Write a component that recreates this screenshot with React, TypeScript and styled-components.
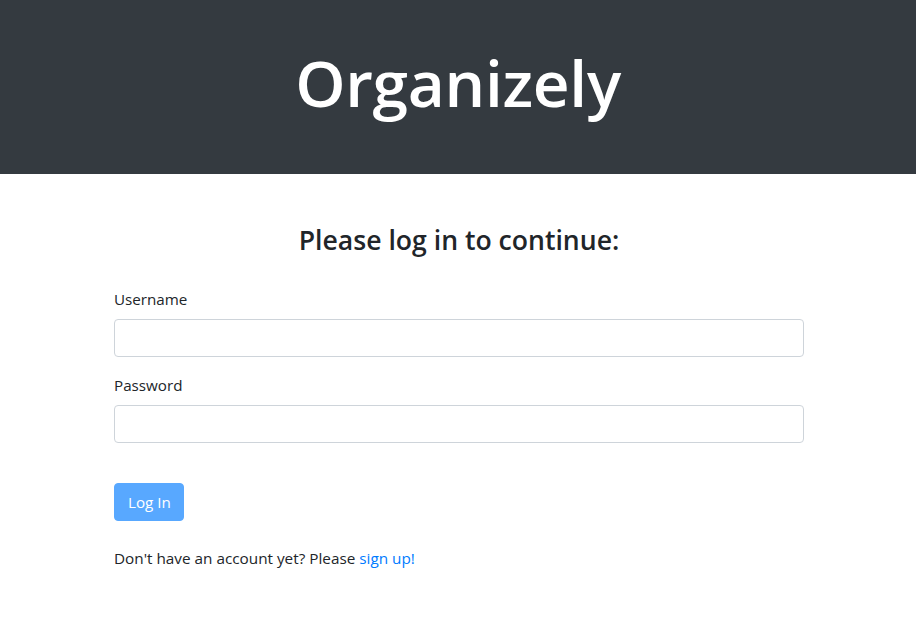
import React from "react";
import styled, { createGlobalStyle } from "styled-components";

const GlobalStyle = createGlobalStyle`
  html, body { margin: 0; padding: 0; background: #fff; }
  body {
    font-family: "Open Sans", "Noto Sans", "Liberation Sans", sans-serif;
    font-size: 16px;
    line-height: 1.5;
    color: #212529;
  }
  * { box-sizing: border-box; }
`;

const Header = styled.header`
  background: #343a40;
  height: 174px;
  display: flex;
  align-items: center;
  justify-content: center;
`;

const Title = styled.h1`
  margin: 0;
  color: #fff;
  font-size: 64px;
  font-weight: 600;
  line-height: 1;
  padding-bottom: 8px;
  letter-spacing: -0.3px;
`;

const Container = styled.main`
  max-width: 720px;
  margin: 0 auto;
  padding: 50px 14px 0 16px;
`;

const Heading = styled.h3`
  margin: 0 0 30px;
  text-align: center;
  font-size: 26.6px;
  font-weight: 600;
  line-height: 1.25;
  color: #212529;
`;

const Form = styled.form`
  display: flex;
  flex-direction: column;
`;

const Group = styled.div`
  display: flex;
  flex-direction: column;
  margin-bottom: 16px;
`;

const Label = styled.label`
  font-size: 15.2px;
  line-height: 24px;
  margin-bottom: 8px;
`;

const Input = styled.input`
  height: 38px;
  width: 100%;
  border: 1px solid #ced4da;
  border-radius: 4px;
  padding: 6px 12px;
  font-size: 16px;
  font-family: inherit;
  color: #495057;
  background: #fff;
`;

const Button = styled.button`
  align-self: flex-start;
  margin-top: 24px;
  height: 38px;
  padding: 0 12px 0 13px;
  border: 1px solid #007bff;
  border-radius: 4px;
  background: #007bff;
  color: #fff;
  opacity: 0.65;
  font-family: inherit;
  font-size: 15.2px;
  font-weight: 500;
  line-height: 1.5;
`;

const Footer = styled.p`
  margin: 25px 0 0;
  font-size: 15.3px;
  line-height: 24px;
`;

const Link = styled.a`
  color: #007bff;
  text-decoration: none;
`;

export default function App() {
  return (
    <>
      <GlobalStyle />
      <Header>
        <Title>Organizely</Title>
      </Header>
      <Container>
        <Heading>Please log in to continue:</Heading>
        <Form onSubmit={(e) => e.preventDefault()}>
          <Group>
            <Label htmlFor="username">Username</Label>
            <Input id="username" type="text" />
          </Group>
          <Group>
            <Label htmlFor="password">Password</Label>
            <Input id="password" type="password" />
          </Group>
          <Button type="submit" disabled>Log In</Button>
        </Form>
        <Footer>
          Don't have an account yet? Please <Link href="#">sign up!</Link>
        </Footer>
      </Container>
    </>
  );
}
